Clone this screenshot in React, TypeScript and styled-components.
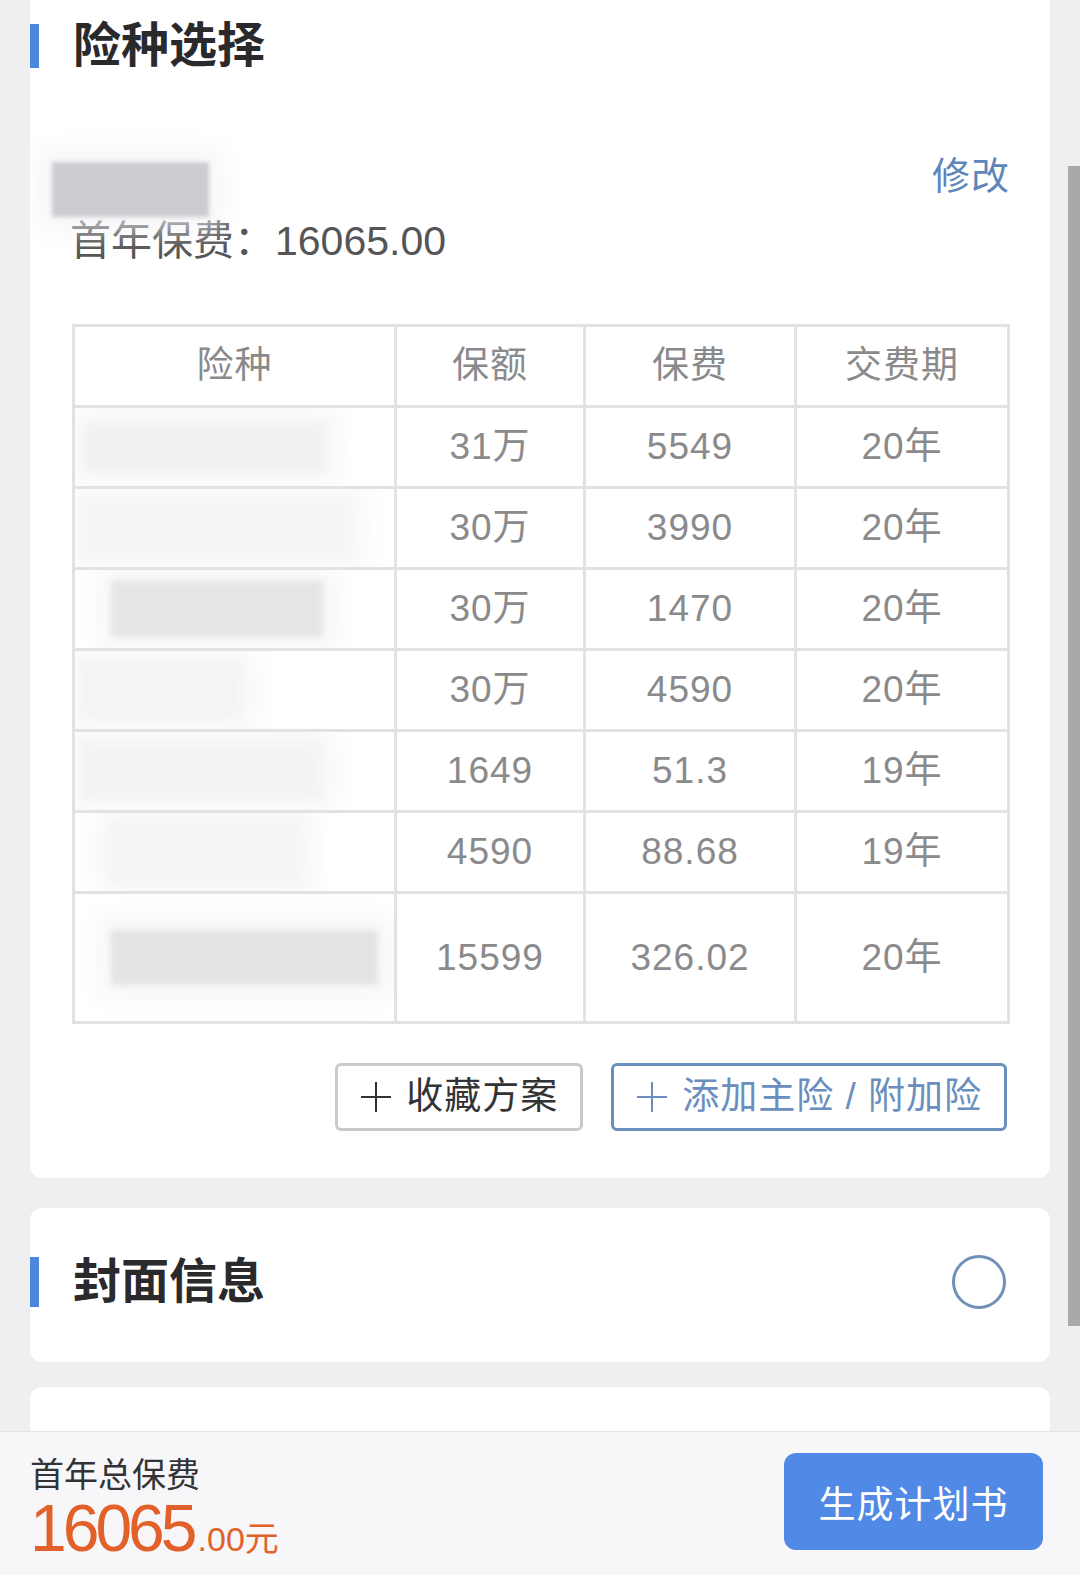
import React from 'react';
import styled, { createGlobalStyle } from 'styled-components';

const GlobalStyle = createGlobalStyle`
  body {
    margin: 0;
    background: #efeff1;
    font-family: "Liberation Sans", "Noto Sans CJK SC", sans-serif;
  }
`

const Page = styled.div`
  position: relative;
  width: 1080px;
  height: 1575px;
  overflow: hidden;
  display: flex;
  flex-direction: column;
`

const Content = styled.div`
  flex: 1;
  display: flex;
  flex-direction: column;
  padding: 0 30px;
  overflow: hidden;
`

const Card = styled.div<{ $cut?: boolean }>`
  background: #ffffff;
  border-radius: ${p => (p.$cut ? '0 0 12px 12px' : '12px')};
  flex-shrink: 0;
`

const CoverCard = styled(Card)`
  margin-top: 30px;
  height: 148px;
  display: flex;
  align-items: center;
  justify-content: space-between;
  padding: 0 44px 6px 0;
`

const MoreCard = styled(Card)`
  margin-top: 25px;
  flex: 1;
  border-radius: 12px 12px 0 0;
`

const Header = styled.div<{ $top?: number }>`
  display: flex;
  align-items: center;
  margin-top: ${p => p.$top ?? 0}px;
  height: 48px;
`

const Bar = styled.span<{ $h: number }>`
  width: 9px;
  height: ${p => p.$h}px;
  background: #4b86df;
`

const Title = styled.h2`
  margin: 0 0 0 34px;
  font-size: 48px;
  line-height: 48px;
  font-weight: 700;
  color: #2a2a2c;
`

const Body = styled.div`
  padding: 0 40px 47px 42px;
`

const NameRow = styled.div`
  margin-top: 84px;
  height: 64px;
  display: flex;
  justify-content: space-between;
  align-items: flex-start;
`

const Blur = styled.div<{ $w: number; $h: number; $c: string; $ml?: number; $mt?: number; $b?: number }>`
  width: ${p => p.$w}px;
  height: ${p => p.$h}px;
  margin-left: ${p => p.$ml ?? 0}px;
  margin-top: ${p => p.$mt ?? 0}px;
  background: ${p => p.$c};
  filter: blur(${p => p.$b ?? 4}px);
  box-shadow: 0 0 22px 14px rgba(244, 244, 247, 0.7);
  flex-shrink: 0;
`

const EditLink = styled.a`
  font-size: 38px;
  line-height: 44px;
  color: #5d86bb;
  text-decoration: none;
  letter-spacing: 1px;
`

const Premium = styled.div`
  font-size: 41px;
  line-height: 46px;
  color: #555557;
  margin-left: -2px;
`

const Table = styled.table`
  margin-top: 60px;
  width: 938px;
  border-collapse: collapse;
  table-layout: fixed;
  border: 3px solid #e2e2e4;

  td, th {
    border: 3px solid #e2e2e4;
    padding: 0;
    text-align: center;
    font-size: 37px;
    line-height: 44px;
    font-weight: 400;
    color: #8a8a8c;
    letter-spacing: 1px;
  }
`

const Row = styled.tr<{ $h: number }>`
  height: ${p => p.$h}px;
`

const NameCell = styled.td`
  position: relative;
  overflow: hidden;
`

const CellBlur = styled.div`
  display: flex;
  align-items: center;
  height: 100%;
`

const Actions = styled.div`
  display: flex;
  justify-content: flex-end;
  gap: 28px;
  margin-top: 39px;
  padding-right: 3px;
`

const ActionButton = styled.button<{ $primary?: boolean }>`
  height: 68px;
  padding: 0 22px;
  display: flex;
  align-items: center;
  gap: 14px;
  background: #ffffff;
  border: 3px solid ${p => (p.$primary ? '#6a8fbe' : '#cacacc')};
  border-radius: 6px;
  color: ${p => (p.$primary ? '#6a8fbe' : '#333335')};
  font-family: "Liberation Sans", "Noto Sans CJK SC", sans-serif;
  font-size: 37px;
  line-height: 44px;
  letter-spacing: 1px;
`

const Circle = styled.span`
  width: 48px;
  height: 48px;
  border: 3px solid #7190b8;
  border-radius: 50%;
`

const Footer = styled.div`
  height: 143px;
  flex-shrink: 0;
  background: #f7f7f9;
  border-top: 1px solid #e4e4e6;
  display: flex;
  align-items: center;
  justify-content: space-between;
  padding: 0 37px 0 30px;
`

const Total = styled.div`
  display: flex;
  flex-direction: column;
  padding-top: 18px;
`

const TotalLabel = styled.div`
  font-size: 34px;
  line-height: 42px;
  color: #333335;
`

const TotalPrice = styled.div`
  display: flex;
  align-items: baseline;
  color: #e2612a;
  line-height: 64px;
`

const Big = styled.span`
  font-size: 66px;
  letter-spacing: -4px;
`

const Small = styled.span`
  font-size: 34px;
  margin-left: 4px;
`

const Generate = styled.button`
  width: 259px;
  height: 97px;
  border: none;
  border-radius: 12px;
  background: #5089e6;
  color: #ffffff;
  font-family: "Liberation Sans", "Noto Sans CJK SC", sans-serif;
  font-size: 37px;
  letter-spacing: 1px;
  margin-top: -4px;
`

const ScrollThumb = styled.div`
  position: absolute;
  right: 0;
  top: 166px;
  width: 12px;
  height: 1160px;
  background: #a9a9ac;
`

const Plus = () => (
  <svg width="32" height="32" viewBox="0 0 32 32">
    <path d="M16 1v30M1 16h30" stroke="currentColor" strokeWidth="2" fill="none" />
  </svg>
)

const rows = [
  { amt: '31万', fee: '5549', term: '20年', h: 81, blur: { w: 240, h: 48, c: '#f1f1f3', ml: 10 } },
  { amt: '30万', fee: '3990', term: '20年', h: 81, blur: { w: 270, h: 52, c: '#f5f5f7', ml: 6 } },
  { amt: '30万', fee: '1470', term: '20年', h: 81, blur: { w: 212, h: 56, c: '#e5e5e8', ml: 36, b: 3 } },
  { amt: '30万', fee: '4590', term: '20年', h: 81, blur: { w: 160, h: 56, c: '#f4f4f6', ml: 6 } },
  { amt: '1649', fee: '51.3', term: '19年', h: 81, blur: { w: 240, h: 56, c: '#f3f3f5', ml: 6 } },
  { amt: '4590', fee: '88.68', term: '19年', h: 81, blur: { w: 190, h: 62, c: '#f5f5f7', ml: 36 } },
  { amt: '15599', fee: '326.02', term: '20年', h: 130, blur: { w: 267, h: 55, c: '#e3e3e6', ml: 36, b: 3 } },
]

const App: React.FC = () => {
  return (
    <Page>
      <GlobalStyle />
      <Content>
        <Card $cut>
          <Header $top={22}>
            <Bar $h={44} />
            <Title>险种选择</Title>
          </Header>
          <Body>
            <NameRow>
              <Blur $w={157} $h={55} $c="#cdcdd1" $ml={-20} $mt={8} $b={2} />
              <EditLink>修改</EditLink>
            </NameRow>
            <Premium>首年保费：16065.00</Premium>
            <Table>
              <colgroup>
                <col style={{ width: 322 }} />
                <col style={{ width: 189 }} />
                <col style={{ width: 211 }} />
                <col />
              </colgroup>
              <thead>
                <Row $h={81}>
                  <th>险种</th>
                  <th>保额</th>
                  <th>保费</th>
                  <th>交费期</th>
                </Row>
              </thead>
              <tbody>
                {rows.map((r, i) => (
                  <Row $h={r.h} key={i}>
                    <NameCell>
                      <CellBlur>
                        <Blur $w={r.blur.w} $h={r.blur.h} $c={r.blur.c} $ml={r.blur.ml} $b={r.blur.b} />
                      </CellBlur>
                    </NameCell>
                    <td>{r.amt}</td>
                    <td>{r.fee}</td>
                    <td>{r.term}</td>
                  </Row>
                ))}
              </tbody>
            </Table>
            <Actions>
              <ActionButton>
                <Plus />
                收藏方案
              </ActionButton>
              <ActionButton $primary>
                <Plus />
                添加主险 / 附加险
              </ActionButton>
            </Actions>
          </Body>
        </Card>
        <CoverCard>
          <Header>
            <Bar $h={50} />
            <Title>封面信息</Title>
          </Header>
          <Circle />
        </CoverCard>
        <MoreCard />
      </Content>
      <Footer>
        <Total>
          <TotalLabel>首年总保费</TotalLabel>
          <TotalPrice>
            <Big>16065</Big>
            <Small>.00元</Small>
          </TotalPrice>
        </Total>
        <Generate>生成计划书</Generate>
      </Footer>
      <ScrollThumb />
    </Page>
  );
};

export default App;
